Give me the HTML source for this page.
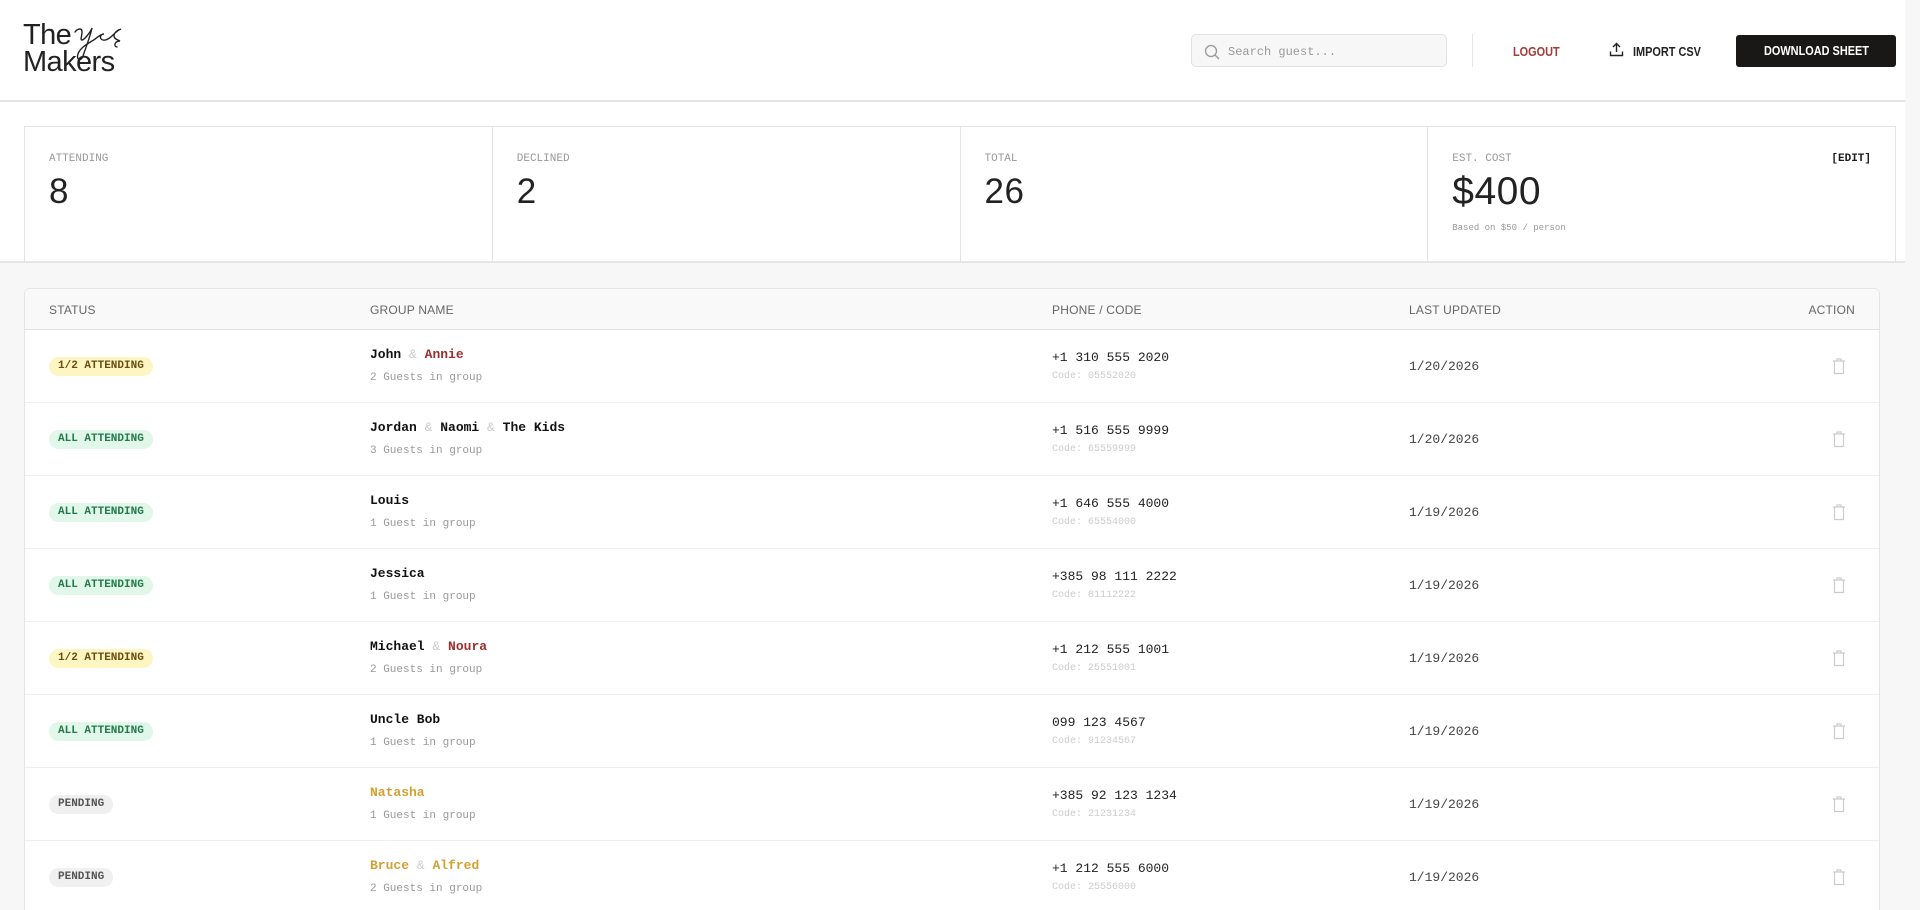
<!DOCTYPE html>
<html><head><meta charset="utf-8"><style>
*{box-sizing:border-box;margin:0;padding:0}
html{width:1920px;height:910px;overflow:hidden}
body{width:1920px;height:910px;overflow:hidden;background:#f7f7f7;font-family:"Liberation Sans",sans-serif;color:#1a1a1a;position:relative}
.top{position:absolute;left:0;top:0;width:1905px;height:263px;background:#fff;border-bottom:2px solid #e6e6e6}
.hdrline{position:absolute;left:0;top:100px;width:1905px;height:2px;background:#e3e3e3}
.logo{position:absolute;left:23px;top:22px;font-size:29px;line-height:27px;color:#222;letter-spacing:-0.6px}
.search{position:absolute;left:1191px;top:34px;width:256px;height:33px;border:1px solid #e2e2e2;border-radius:5px;background:#f7f7f7;font-family:"Liberation Mono",monospace;font-size:12px;color:#999;padding:10px 0 0 36px}
.search svg{position:absolute;left:12px;top:9px}
.div{position:absolute;left:1472px;top:34px;width:1px;height:33px;background:#e5e5e5}
.nav{position:absolute;top:44px;font-size:13px;font-weight:bold;transform:scaleX(0.84);transform-origin:left}
.btn{position:absolute;left:1736px;top:35px;width:160px;height:32px;background:#1a1817;color:#fff;border-radius:3px;text-align:center;line-height:32px;font-size:13px;font-weight:bold}
.btn span{display:inline-block;transform:scaleX(0.84)}
.stats{position:absolute;left:24px;top:126px;width:1872px;height:137px;border:1px solid #e4e4e4;border-bottom:none;display:flex}
.st{flex:1;border-right:1px solid #e4e4e4;position:relative;padding:26px 0 0 24px}
.st:last-child{border-right:none}
.lab{font-family:"Liberation Mono",monospace;font-size:11px;color:#999}
.num{font-size:35px;font-weight:300;color:#222;margin-top:7px;letter-spacing:0.5px}
.card{position:absolute;left:24px;top:288px;width:1856px;height:640px;background:#fff;border:1px solid #e4e4e4;border-radius:6px;overflow:hidden}
.th{height:41px;background:#f9f9f9;border-bottom:1px solid #e4e4e4;position:relative;font-size:12px;color:#666;letter-spacing:0.2px}
.th span,.row>div{position:absolute}
.th span{top:14px}
.row{height:73px;border-bottom:1px solid #efefef;position:relative;font-family:"Liberation Mono",monospace}
.badge{left:24px;top:27px;height:19px;line-height:19px;padding:0 9px;border-radius:10px;font-size:11px;font-weight:bold}
.y{background:#fdf6c3;color:#6b4d0e}.g{background:#e0f7ea;color:#237a4a}.p{background:#f0f0f0;color:#555}
.nm{left:345px;top:17px;font-size:13px;font-weight:bold;color:#111}
.nm i{font-style:normal;color:#ccc;font-weight:normal}
.r{color:#9b2f2f}.o{color:#d4a030}
.sub{left:345px;top:42px;font-size:11px;color:#999}
.ph{left:1027px;top:20px;font-size:13px;color:#222}
.cd{left:1027px;top:41px;font-size:10px;color:#ccc}
.dt{left:1384px;top:29px;font-size:13px;color:#444}
.tr{left:1807px;top:27px}
</style></head><body>
<div class="top"></div>
<div class="hdrline"></div>
<div class="logo">The<br>Makers
<svg style="position:absolute;left:48px;top:-8px" width="84" height="52" viewBox="0 0 84 52"><path d="M4 18c3-4 7-4 7 0s-2 8 0 8 8-7 10-12c-2 9-7 22-9 28-2 6-7 4-5-2s9-10 14-13c4-2 8-7 12-7-4 0-5 5-1 6 4 1 8-3 10-5 2-2 5-5 8-6-4 1-7 4-7 7 0 3 4 4 6 5-5 0-7 5-3 6" fill="none" stroke="#222" stroke-width="1.4" stroke-linecap="round"/></svg></div>
<div class="search"><svg width="16" height="16" viewBox="0 0 16 16"><circle cx="7" cy="7" r="5.5" fill="none" stroke="#999" stroke-width="1.3"/><path d="M11 11l4 4" stroke="#999" stroke-width="1.3"/></svg>Search guest...</div>
<div class="div"></div>
<div class="nav" style="left:1513px;color:#a23a3a">LOGOUT</div>
<svg style="position:absolute;left:1609px;top:42px" width="15" height="15" viewBox="0 0 15 15"><path d="M7.5 10V1.5M4 5l3.5-3.5L11 5M1.5 9.5v4h12v-4" fill="none" stroke="#222" stroke-width="1.4"/></svg>
<div class="nav" style="left:1633px;color:#222">IMPORT CSV</div>
<div class="btn"><span>DOWNLOAD SHEET</span></div>
<div class="stats">
<div class="st"><div class="lab">ATTENDING</div><div class="num">8</div></div>
<div class="st"><div class="lab">DECLINED</div><div class="num">2</div></div>
<div class="st"><div class="lab">TOTAL</div><div class="num">26</div></div>
<div class="st"><div class="lab">EST. COST</div><div class="num" style="font-size:39px;margin-top:5px">$400</div><div class="lab" style="font-size:9px;margin-top:9px">Based on $50 / person</div><div style="position:absolute;right:24px;top:26px;font-family:'Liberation Mono',monospace;font-size:11px;font-weight:bold">[EDIT]</div></div>
</div>
<div class="card">
<div class="th"><span style="left:24px">STATUS</span><span style="left:345px">GROUP NAME</span><span style="left:1027px">PHONE / CODE</span><span style="left:1384px">LAST UPDATED</span><span style="right:24px">ACTION</span></div>
<div class="row"><div class="badge y">1/2 ATTENDING</div><div class="nm">John <i>&amp;</i> <span class="r">Annie</span></div><div class="sub">2 Guests in group</div><div class="ph">+1 310 555 2020</div><div class="cd">Code: 05552020</div><div class="dt">1/20/2026</div><div class="tr"><svg width="14" height="18" viewBox="0 0 14 18"><path d="M1 4h12M5 4V2h4v2M2.5 4v12.5h9V4" fill="none" stroke="#ccc" stroke-width="1.2"/></svg></div></div>
<div class="row"><div class="badge g">ALL ATTENDING</div><div class="nm">Jordan <i>&amp;</i> Naomi <i>&amp;</i> The Kids</div><div class="sub">3 Guests in group</div><div class="ph">+1 516 555 9999</div><div class="cd">Code: 65559999</div><div class="dt">1/20/2026</div><div class="tr"><svg width="14" height="18" viewBox="0 0 14 18"><path d="M1 4h12M5 4V2h4v2M2.5 4v12.5h9V4" fill="none" stroke="#ccc" stroke-width="1.2"/></svg></div></div>
<div class="row"><div class="badge g">ALL ATTENDING</div><div class="nm">Louis</div><div class="sub">1 Guest in group</div><div class="ph">+1 646 555 4000</div><div class="cd">Code: 65554000</div><div class="dt">1/19/2026</div><div class="tr"><svg width="14" height="18" viewBox="0 0 14 18"><path d="M1 4h12M5 4V2h4v2M2.5 4v12.5h9V4" fill="none" stroke="#ccc" stroke-width="1.2"/></svg></div></div>
<div class="row"><div class="badge g">ALL ATTENDING</div><div class="nm">Jessica</div><div class="sub">1 Guest in group</div><div class="ph">+385 98 111 2222</div><div class="cd">Code: 81112222</div><div class="dt">1/19/2026</div><div class="tr"><svg width="14" height="18" viewBox="0 0 14 18"><path d="M1 4h12M5 4V2h4v2M2.5 4v12.5h9V4" fill="none" stroke="#ccc" stroke-width="1.2"/></svg></div></div>
<div class="row"><div class="badge y">1/2 ATTENDING</div><div class="nm">Michael <i>&amp;</i> <span class="r">Noura</span></div><div class="sub">2 Guests in group</div><div class="ph">+1 212 555 1001</div><div class="cd">Code: 25551001</div><div class="dt">1/19/2026</div><div class="tr"><svg width="14" height="18" viewBox="0 0 14 18"><path d="M1 4h12M5 4V2h4v2M2.5 4v12.5h9V4" fill="none" stroke="#ccc" stroke-width="1.2"/></svg></div></div>
<div class="row"><div class="badge g">ALL ATTENDING</div><div class="nm">Uncle Bob</div><div class="sub">1 Guest in group</div><div class="ph">099 123 4567</div><div class="cd">Code: 91234567</div><div class="dt">1/19/2026</div><div class="tr"><svg width="14" height="18" viewBox="0 0 14 18"><path d="M1 4h12M5 4V2h4v2M2.5 4v12.5h9V4" fill="none" stroke="#ccc" stroke-width="1.2"/></svg></div></div>
<div class="row"><div class="badge p">PENDING</div><div class="nm"><span class="o">Natasha</span></div><div class="sub">1 Guest in group</div><div class="ph">+385 92 123 1234</div><div class="cd">Code: 21231234</div><div class="dt">1/19/2026</div><div class="tr"><svg width="14" height="18" viewBox="0 0 14 18"><path d="M1 4h12M5 4V2h4v2M2.5 4v12.5h9V4" fill="none" stroke="#ccc" stroke-width="1.2"/></svg></div></div>
<div class="row"><div class="badge p">PENDING</div><div class="nm"><span class="o">Bruce</span> <i>&amp;</i> <span class="o">Alfred</span></div><div class="sub">2 Guests in group</div><div class="ph">+1 212 555 6000</div><div class="cd">Code: 25556000</div><div class="dt">1/19/2026</div><div class="tr"><svg width="14" height="18" viewBox="0 0 14 18"><path d="M1 4h12M5 4V2h4v2M2.5 4v12.5h9V4" fill="none" stroke="#ccc" stroke-width="1.2"/></svg></div></div>
</div>
</body></html>
